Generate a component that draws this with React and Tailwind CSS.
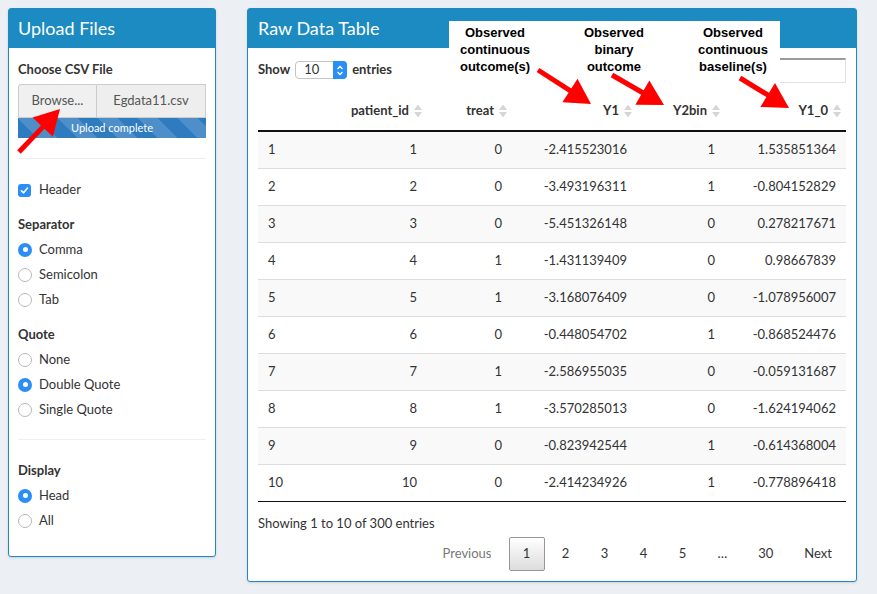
import React from 'react';

const rows = [
  [1, 1, 0, '-2.415523016', 1, '1.535851364'],
  [2, 2, 0, '-3.493196311', 1, '-0.804152829'],
  [3, 3, 0, '-5.451326148', 0, '0.278217671'],
  [4, 4, 1, '-1.431139409', 0, '0.98667839'],
  [5, 5, 1, '-3.168076409', 0, '-1.078956007'],
  [6, 6, 0, '-0.448054702', 1, '-0.868524476'],
  [7, 7, 1, '-2.586955035', 0, '-0.059131687'],
  [8, 8, 1, '-3.570285013', 0, '-1.624194062'],
  [9, 9, 0, '-0.823942544', 1, '-0.614368004'],
  [10, 10, 0, '-2.414234926', 1, '-0.778896418'],
];

const SortIcon = () => (
  <svg width="8" height="13" viewBox="0 0 8 13" className="absolute right-[5px] top-1/2 -translate-y-1/2">
    <path d="M4 0 L8 5.5 L0 5.5 Z" fill="#d6d6d6" />
    <path d="M4 13 L8 7.5 L0 7.5 Z" fill="#d6d6d6" />
  </svg>
);

const Radio = ({ checked, label }) => (
  <div className="flex h-[25px] items-center">
    {checked ? (
      <span className="flex h-[14px] w-[14px] items-center justify-center rounded-full bg-[#2b8ef7]">
        <span className="h-[5px] w-[5px] rounded-full bg-white" />
      </span>
    ) : (
      <span className="h-[14px] w-[14px] rounded-full border border-[#b8b8b8] bg-white" />
    )}
    <span className="ml-[7px] text-[13px] text-[#333]">{label}</span>
  </div>
);

const Arrow = ({ x1, y1, x2, y2 }) => {
  const dx = x2 - x1;
  const dy = y2 - y1;
  const len = Math.sqrt(dx * dx + dy * dy);
  const ux = dx / len;
  const uy = dy / len;
  const hl = 25;
  const hw = 14;
  const bx = x2 - ux * hl;
  const by = y2 - uy * hl;
  const pts = `${x2},${y2} ${bx - uy * hw},${by + ux * hw} ${bx + uy * hw},${by - ux * hw}`;
  return (
    <g>
      <line x1={x1} y1={y1} x2={bx + ux * 2} y2={by + uy * 2} stroke="#ff0000" strokeWidth="5" />
      <polygon points={pts} fill="#ff0000" />
    </g>
  );
};

export default function App() {
  const cols = [
    { label: '', w: 'w-[79px]' },
    { label: 'patient_id', w: 'w-[90px]' },
    { label: 'treat', w: 'w-[85px]' },
    { label: 'Y1', w: 'w-[125px]' },
    { label: 'Y2bin', w: 'w-[88px]' },
    { label: 'Y1_0', w: 'w-[121px]' },
  ];

  return (
    <div className="relative min-h-[594px] w-[877px] overflow-hidden bg-[#ecf0f5] font-['Lato',sans-serif] text-[#333]">
      <div className="flex items-start pl-[8px] pt-[8px]">
        {/* left panel */}
        <div className="w-[208px] rounded-[3px] border border-[#1b8bc2] bg-white shadow-sm">
          <div className="flex h-[39px] items-center bg-[#1b8bc2] px-[9px] text-[18px] text-white">
            Upload Files
          </div>
          <div className="px-[9px] pb-[23px] pt-[13px]">
            <div className="text-[13px] font-bold leading-[16px]">Choose CSV File</div>
            <div className="mt-[7px] flex h-[34px] text-[13px] text-[#555]">
              <div className="flex w-[79px] items-center justify-center rounded-tl-[3px] border border-[#ccc] bg-[#f0f0f0]">
                Browse...
              </div>
              <div className="flex flex-1 items-center justify-center border border-l-0 border-[#ccc] bg-[#eeeeee]">
                Egdata11.csv
              </div>
            </div>
            <div className="flex h-[20px] items-center justify-center bg-[#2f7bbf] bg-[linear-gradient(45deg,rgba(255,255,255,.15)_25%,transparent_25%,transparent_50%,rgba(255,255,255,.15)_50%,rgba(255,255,255,.15)_75%,transparent_75%,transparent)] bg-[length:40px_40px] text-[11px] text-white">
              Upload complete
            </div>
            <div className="mt-[20px] border-t border-[#eee]" />
            <div className="mt-[24px] flex h-[14px] items-center">
              <span className="flex h-[13px] w-[13px] items-center justify-center rounded-[3px] bg-[#2b8ef7]">
                <svg width="9" height="9" viewBox="0 0 9 9">
                  <path d="M1.5 4.8 L3.6 6.8 L7.5 2" stroke="white" strokeWidth="1.6" fill="none" strokeLinecap="round" strokeLinejoin="round" />
                </svg>
              </span>
              <span className="ml-[8px] text-[13px]">Header</span>
            </div>
            <div className="mt-[19px] text-[13px] font-bold leading-[16px]">Separator</div>
            <div className="mt-[5px]">
              <Radio checked label="Comma" />
              <Radio label="Semicolon" />
              <Radio label="Tab" />
            </div>
            <div className="mt-[14px] text-[13px] font-bold leading-[16px]">Quote</div>
            <div className="mt-[5px]">
              <Radio label="None" />
              <Radio checked label="Double Quote" />
              <Radio label="Single Quote" />
            </div>
            <div className="mt-[17px] border-t border-[#eee]" />
            <div className="mt-[22px] text-[13px] font-bold leading-[16px]">Display</div>
            <div className="mt-[5px]">
              <Radio checked label="Head" />
              <Radio label="All" />
            </div>
          </div>
        </div>

        {/* right panel */}
        <div className="ml-[31px] w-[610px] rounded-[3px] border border-[#1b8bc2] bg-white shadow-sm">
          <div className="flex h-[39px] items-center bg-[#1b8bc2] px-[10px] text-[18px] text-white">
            Raw Data Table
          </div>
          <div className="px-[10px] pb-[10px] pt-[13px]">
            <div className="flex h-[18px] items-center justify-between text-[13px] font-bold">
              <div className="flex items-center">
                <span>Show</span>
                <div className="mx-[5px] flex h-[18px] w-[52px] items-center justify-between rounded-[4px] border border-[#c4c4c4] bg-white pl-[8px] font-normal">
                  <span>10</span>
                  <span className="-mr-px flex h-[18px] w-[14px] items-center justify-center rounded-r-[4px] bg-[#2b8ef7]">
                    <svg width="8" height="11" viewBox="0 0 8 11">
                      <path d="M1.5 4 L4 1.5 L6.5 4 M1.5 7 L4 9.5 L6.5 7" stroke="white" strokeWidth="1.3" fill="none" />
                    </svg>
                  </span>
                </div>
                <span>entries</span>
              </div>
              <div className="flex items-center font-normal">
                <span className="mr-[6px]">Search:</span>
                <div className="h-[25px] w-[140px] border border-t-2 border-[#e2e2e2] border-t-[#9a9a9a] bg-white" />
              </div>
            </div>

            <table className="mt-[13px] w-[588px] table-fixed border-collapse text-[13px]">
              <thead>
                <tr className="h-[39px] border-b-2 border-[#111]">
                  {cols.map((c, i) => (
                    <th key={i} className={`${c.w} relative pr-[18px] text-right font-bold`}>
                      {c.label}
                      {i > 0 && <SortIcon />}
                    </th>
                  ))}
                </tr>
              </thead>
              <tbody>
                {rows.map((r, i) => (
                  <tr
                    key={i}
                    className={`h-[37px] border-b ${i === rows.length - 1 ? 'border-[#111]' : 'border-[#ddd]'} ${i % 2 === 0 ? 'bg-[#f9f9f9]' : 'bg-white'}`}
                  >
                    {r.map((v, j) => (
                      <td key={j} className={`px-[10px] ${j === 0 ? 'text-left' : 'text-right'}`}>
                        {v}
                      </td>
                    ))}
                  </tr>
                ))}
              </tbody>
            </table>

            <div className="mt-[13px] text-[13px] leading-[16px]">Showing 1 to 10 of 300 entries</div>
            <div className="mt-[6px] flex justify-end text-[13px]">
              <span className="ml-[3px] flex h-[34px] items-center border border-transparent px-[13px] text-[#777]">Previous</span>
              <span className="ml-[3px] flex h-[34px] min-w-[36px] items-center justify-center rounded-[2px] border border-[#979797] bg-[linear-gradient(to_bottom,#fff_0%,#dcdcdc_100%)] px-[13px]">
                1
              </span>
              {['2', '3', '4', '5', '…', '30', 'Next'].map((p) => (
                <span key={p} className="ml-[3px] flex h-[34px] min-w-[36px] items-center justify-center border border-transparent px-[13px]">
                  {p}
                </span>
              ))}
            </div>
          </div>
        </div>
      </div>

      {/* annotation overlay */}
      <div className="absolute left-[449px] top-[21px] flex h-[64px] w-[331px] gap-[27px] bg-white pt-[3px] font-['Liberation_Sans',Arial,sans-serif] text-[13px] font-bold leading-[17px] text-black">
        <div className="w-[92px] text-center">Observed<br />continuous<br />outcome(s)</div>
        <div className="w-[92px] text-center">Observed<br />binary<br />outcome</div>
        <div className="w-[92px] text-center">Observed<br />continuous<br />baseline(s)</div>
      </div>
      <svg className="pointer-events-none absolute left-0 top-0" width="877" height="594">
        <Arrow x1={19} y1={152} x2={60} y2={109} />
        <Arrow x1={538} y1={70} x2={591} y2={104} />
        <Arrow x1={612} y1={75} x2={664} y2={105} />
        <Arrow x1={740} y1={78} x2={789} y2={108} />
      </svg>
    </div>
  );
}
